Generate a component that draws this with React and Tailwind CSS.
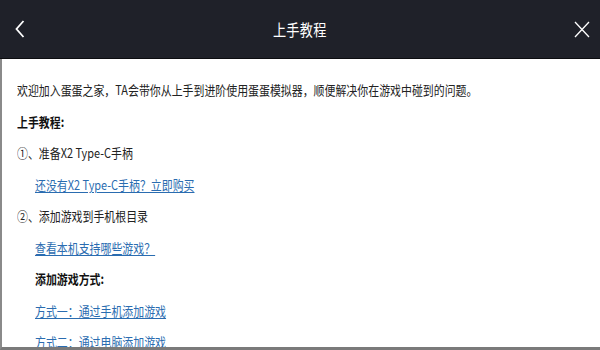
import React from "react";

const font = "font-['Noto_Sans_CJK_SC','Noto_Sans',sans-serif]";

function Line({ children, indent, bold, link }) {
  let color = "text-[#222]";
  if (bold) color = "font-bold text-[#111]";
  if (link) color = "text-[#2a6cb0] underline underline-offset-2";
  return (
    <div className={`h-[31.5px] flex items-center ${indent ? "pl-[33px]" : "pl-[15px]"}`}>
      <span className={`inline-block origin-left scale-x-[0.84] whitespace-nowrap text-[13px] leading-none ${color}`}>
        {children}
      </span>
    </div>
  );
}

function App() {
  return (
    <div className={`w-[600px] h-[350px] overflow-hidden bg-white flex flex-col ${font}`}>
      {/* top bar */}
      <div className="h-[59px] shrink-0 bg-[#1f2129] border-b border-[#0c0d10] flex items-center justify-between px-[14px]">
        <svg width="10" height="18" viewBox="0 0 10 18" className="ml-[1px]">
          <path d="M8.5 1 L1.5 9 L8.5 17" fill="none" stroke="#fff" strokeWidth="1.8" />
        </svg>
        <span className="inline-block scale-x-[0.82] text-[16px] text-white tracking-wide">上手教程</span>
        <svg width="16" height="17" viewBox="0 0 16 17" className="mr-[-4px]">
          <path d="M1 1 L15 16 M15 1 L1 16" fill="none" stroke="#fff" strokeWidth="1.3" />
        </svg>
      </div>

      {/* content */}
      <div className="flex-1 border-l-2 border-[#8a8a8a] border-b-[3px] border-b-[#7a7a7a] pt-[15px] overflow-hidden">
        <Line>欢迎加入蛋蛋之家，TA会带你从上手到进阶使用蛋蛋模拟器，顺便解决你在游戏中碰到的问题。</Line>
        <Line bold>上手教程:</Line>
        <Line>①、准备X2 Type-C手柄</Line>
        <Line indent link>还没有X2 Type-C手柄？立即购买</Line>
        <Line>②、添加游戏到手机根目录</Line>
        <Line indent link>查看本机支持哪些游戏？</Line>
        <Line indent bold>添加游戏方式:</Line>
        <Line indent link>方式一：通过手机添加游戏</Line>
        <Line indent link>方式二：通过电脑添加游戏</Line>
      </div>
    </div>
  );
}

export default App;
